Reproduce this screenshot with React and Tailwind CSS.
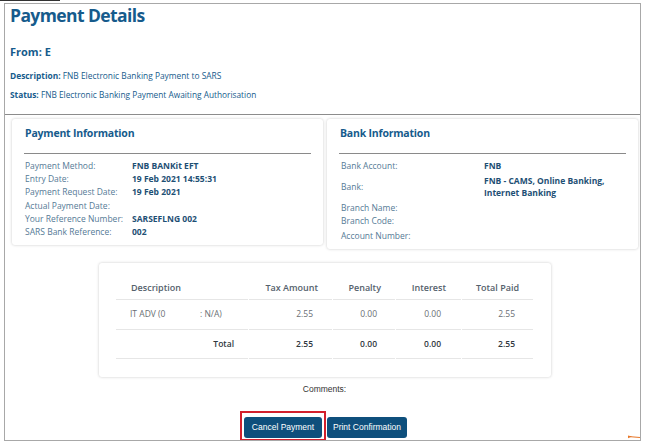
import React from 'react';

const payment = [
  ['Payment Method:', 'FNB BANKit EFT'],
  ['Entry Date:', '19 Feb 2021 14:55:31'],
  ['Payment Request Date:', '19 Feb 2021'],
  ['Actual Payment Date:', ''],
  ['Your Reference Number:', 'SARSEFLNG 002'],
  ['SARS Bank Reference:', '002'],
];

const cols = 'grid grid-cols-[133px_84px_63px_66px_72px]';

function Rule() {
  return (
    <div className={cols}>
      {[0, 1, 2, 3, 4].map((i) => (
        <div key={i} className="h-px bg-[#e6e6e6] mr-[1px]" />
      ))}
    </div>
  );
}

function App() {
  return (
    <div className="w-[651px] h-[447px] bg-white relative" style={{ fontFamily: '"Open Sans", sans-serif' }}>
      <div className="absolute left-0 top-0 w-[60px] h-[1px] bg-[#333]" />
      <div className="ml-[4px] pt-[3px]">
        <div className="w-[637px] h-[438px] border border-[#a8a8a8] overflow-hidden">
          {/* header */}
          <div className="pl-[5px] text-[#165b8c]">
            <h1 className="text-[17.5px] leading-[22px] font-bold tracking-[-0.6px]">Payment Details</h1>
            <p className="text-[11px] font-bold mt-[18px] leading-[16px]">From: E</p>
            <p className="text-[8.4px] mt-[10px] leading-[12px]"><span className="font-bold">Description:</span> FNB Electronic Banking Payment to SARS</p>
            <p className="text-[8.3px] mt-[7px] leading-[12px]"><span className="font-bold">Status:</span> FNB Electronic Banking Payment Awaiting Authorisation</p>
          </div>
          <div className="h-px bg-[#8c8c8c] mt-[13px]" />

          {/* info cards */}
          <div className="flex gap-[4px] pl-[7px] mt-[4px] items-start">
            <div className="w-[311px] h-[126px] rounded-[3px] bg-white shadow-[0_0_3px_rgba(0,0,0,0.22)] px-[12px] pt-[6px]">
              <h2 className="text-[10.5px] font-bold text-[#165b8c] pl-[1px] leading-[16px] tracking-[-0.2px]">Payment Information</h2>
              <div className="h-px bg-[#8a8a8a] mt-[12px]" />
              <div className="mt-[5px] pl-[1px]">
                {payment.map(([k, v]) => (
                  <div key={k} className="flex text-[8.5px] leading-[13.2px]">
                    <span className="w-[107px] text-[#557a96]">{k}</span>
                    <span className="font-bold text-[#1d4f74]">{v}</span>
                  </div>
                ))}
              </div>
            </div>

            <div className="w-[311px] h-[130px] rounded-[3px] bg-white shadow-[0_0_3px_rgba(0,0,0,0.22)] px-[12px] pt-[6px]">
              <h2 className="text-[10.5px] font-bold text-[#165b8c] pl-[1px] leading-[16px] tracking-[-0.2px]">Bank Information</h2>
              <div className="h-px bg-[#8a8a8a] mt-[12px]" />
              <div className="mt-[6px] pl-[2px] text-[8.5px] leading-[12.5px]">
                <div className="flex">
                  <span className="w-[143px] text-[#557a96]">Bank Account:</span>
                  <span className="font-bold text-[#1d4f74]">FNB</span>
                </div>
                <div className="flex items-center mt-[2px]">
                  <span className="w-[143px] text-[#557a96]">Bank:</span>
                  <span className="font-bold text-[#1d4f74] w-[130px]">FNB - CAMS, Online Banking, Internet Banking</span>
                </div>
                <div className="flex mt-[2px]"><span className="text-[#557a96]">Branch Name:</span></div>
                <div className="flex mt-[1px]"><span className="text-[#557a96]">Branch Code:</span></div>
                <div className="flex mt-[2px]"><span className="text-[#557a96]">Account Number:</span></div>
              </div>
            </div>
          </div>

          {/* totals table */}
          <div className="ml-[94px] mt-[14px] w-[452px] h-[114px] rounded-[3px] bg-white shadow-[0_0_3px_rgba(0,0,0,0.22)] pl-[17px] pt-[14px]">
            <div className="w-[418px] text-[9px]">
              <div className={`${cols} text-[#55616c] font-semibold h-[22px] items-center`}>
                <span className="pl-[15px]">Description</span>
                <span className="text-right pr-[15px]">Tax Amount</span>
                <span className="text-right pr-[15px]">Penalty</span>
                <span className="text-right pr-[16px]">Interest</span>
                <span className="text-right pr-[15px]">Total Paid</span>
              </div>
              <Rule />
              <div className={`${cols} text-[8.5px] text-[#6a6f74] h-[29px] items-center`}>
                <span className="flex pl-[14px]"><span className="w-[70px]">IT ADV (0</span><span>: N/A)</span></span>
                <span className="text-right pr-[20px]">2.55</span>
                <span className="text-right pr-[19px]">0.00</span>
                <span className="text-right pr-[21px]">0.00</span>
                <span className="text-right pr-[19px]">2.55</span>
              </div>
              <Rule />
              <div className={`${cols} text-[8.5px] text-[#2f3840] font-semibold h-[28px] items-center`}>
                <span className="text-right pr-[15px]">Total</span>
                <span className="text-right pr-[20px]">2.55</span>
                <span className="text-right pr-[19px]">0.00</span>
                <span className="text-right pr-[21px]">0.00</span>
                <span className="text-right pr-[19px]">2.55</span>
              </div>
              <Rule />
            </div>
          </div>

          {/* comments + actions */}
          <p className="text-center text-[8.5px] text-[#333] mt-[6px] leading-[12px] pl-[4px]" style={{ fontFamily: '"Liberation Sans", Arial, sans-serif' }}>Comments:</p>
          <div className="flex justify-center items-start mt-[16px] pl-[2px] gap-[1px]" style={{ fontFamily: '"Liberation Sans", Arial, sans-serif' }}>
            <div className="border-2 border-[#d3202c] px-[2px] pt-[4px] pb-[1px]">
              <button className="block w-[78px] h-[21px] bg-[#0e4f7c] text-white text-[8.5px] rounded-[3px]">Cancel Payment</button>
            </div>
            <button className="w-[80px] h-[21px] bg-[#0e4f7c] text-white text-[8.5px] rounded-[3px] mt-[6px]">Print Confirmation</button>
          </div>
        </div>
      </div>
      <svg className="absolute left-[627px] top-[434px]" width="14" height="6" viewBox="0 0 14 6">
        <path d="M1 2.5 L13 3.5" stroke="#e8782a" strokeWidth="1.2" />
        <path d="M1 1.5 L5 2.5 L1 4.2 Z" fill="#e8782a" />
      </svg>
    </div>
  );
}

export default App;
